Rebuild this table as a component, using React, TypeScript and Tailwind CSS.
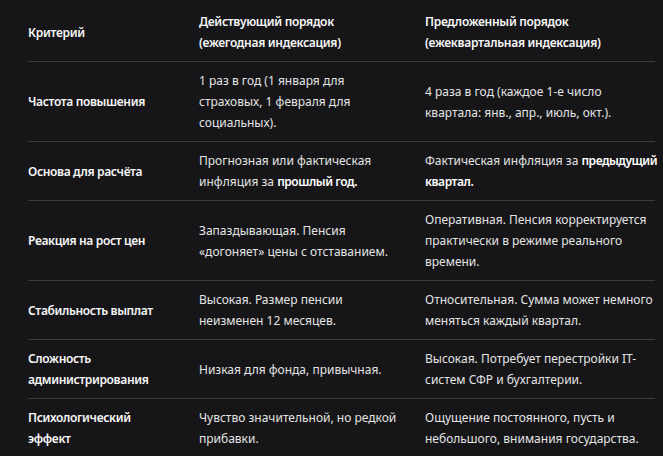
import React from 'react';

type Row = {
  label: React.ReactNode;
  current: React.ReactNode;
  proposed: React.ReactNode;
};

const B = ({ children }: { children: React.ReactNode }) => (
  <strong className="font-semibold text-white tracking-[-0.45px]">{children}</strong>
);

const rows: Row[] = [
  {
    label: 'Частота повышения',
    current: (
      <>
        1 раз в год (1 января для
        <br />
        страховых, 1 февраля для
        <br />
        социальных).
      </>
    ),
    proposed: (
      <>
        4 раза в год (каждое 1-е число
        <br />
        квартала: янв., апр., июль, окт.).
      </>
    ),
  },
  {
    label: 'Основа для расчёта',
    current: (
      <>
        Прогнозная или фактическая
        <br />
        инфляция за <B>прошлый год.</B>
      </>
    ),
    proposed: (
      <>
        Фактическая инфляция за <B>предыдущий</B>
        <br />
        <B>квартал.</B>
      </>
    ),
  },
  {
    label: 'Реакция на рост цен',
    current: (
      <>
        Запаздывающая. Пенсия
        <br />
        «догоняет» цены с отставанием.
      </>
    ),
    proposed: (
      <>
        Оперативная. Пенсия корректируется
        <br />
        практически в режиме реального
        <br />
        времени.
      </>
    ),
  },
  {
    label: 'Стабильность выплат',
    current: (
      <>
        Высокая. Размер пенсии
        <br />
        неизменен 12 месяцев.
      </>
    ),
    proposed: (
      <>
        Относительная. Сумма может немного
        <br />
        меняться каждый квартал.
      </>
    ),
  },
  {
    label: (
      <>
        Сложность
        <br />
        администрирования
      </>
    ),
    current: 'Низкая для фонда, привычная.',
    proposed: (
      <>
        Высокая. Потребует перестройки IT-
        <br />
        систем СФР и бухгалтерии.
      </>
    ),
  },
  {
    label: (
      <>
        Психологический
        <br />
        эффект
      </>
    ),
    current: (
      <>
        Чувство значительной, но редкой
        <br />
        прибавки.
      </>
    ),
    proposed: (
      <>
        Ощущение постоянного, пусть и
        <br />
        небольшого, внимания государства.
      </>
    ),
  },
];

const grid = 'grid grid-cols-[171px_226px_230px] items-center whitespace-nowrap';

export default function App() {
  return (
    <div
      className="w-[663px] h-[456px] overflow-hidden bg-[#161618] pl-[28px] text-[12px] leading-[21px]"
      style={{ fontFamily: '"Noto Sans", "Open Sans", sans-serif' }}
    >
      <div className="w-[627px]">
        {/* Header */}
        <div className={`${grid} pt-[11px] pb-[8px] border-b border-[#3a3a3c] font-semibold tracking-[-0.3px] text-[#f7f7f7]`}>
          <div>Критерий</div>
          <div>
            Действующий порядок
            <br />
            (ежегодная индексация)
          </div>
          <div>
            Предложенный порядок
            <br />
            (ежеквартальная индексация)
          </div>
        </div>

        {rows.map((row, i) => (
          <div
            key={i}
            className={`${grid} py-[8px] border-b border-[#3a3a3c] text-[#e4e4e4]`}
          >
            <div className="font-semibold tracking-[-0.35px] text-[#f7f7f7]">{row.label}</div>
            <div>{row.current}</div>
            <div>{row.proposed}</div>
          </div>
        ))}
      </div>
    </div>
  );
}
